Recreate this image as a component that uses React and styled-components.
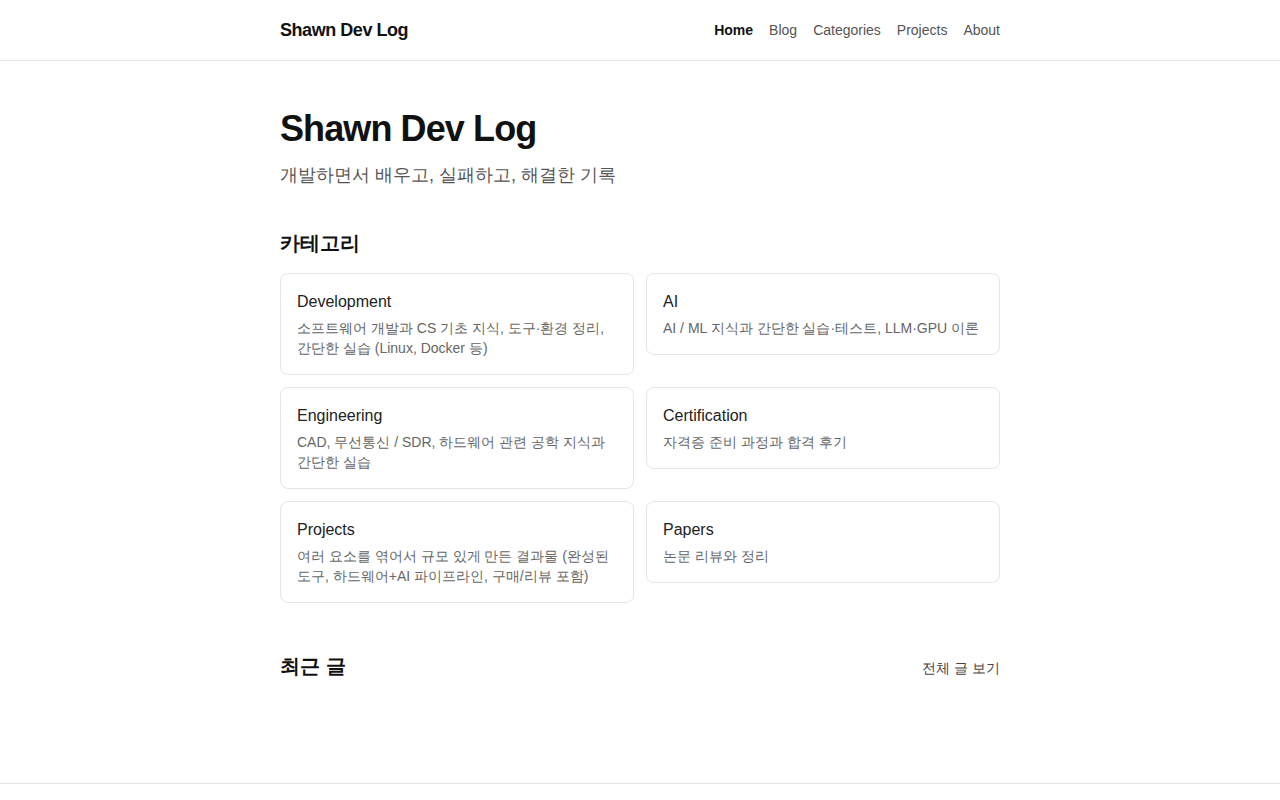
import React from "react";
import styled, { createGlobalStyle } from "styled-components";

const GlobalStyle = createGlobalStyle`
	* {
		box-sizing: border-box;
	}
	html, body {
		margin: 0;
		padding: 0;
		background: #ffffff;
	}
	body {
		font-family: "Liberation Sans", sans-serif;
		color: #111111;
		word-break: keep-all;
	}
	a {
		text-decoration: none;
		color: inherit;
	}
`;

const Shell = styled.div`
	min-height: 100vh;
	display: flex;
	flex-direction: column;
`;

const Header = styled.header`
	height: 61px;
	border-bottom: 1px solid #e5e5e5;
`;

const Inner = styled.div`
	width: 720px;
	margin: 0 auto;
`;

const HeaderRow = styled(Inner)`
	height: 60px;
	display: flex;
	align-items: center;
	justify-content: space-between;
`;

const Logo = styled.a`
	font-size: 18px;
	font-weight: 700;
	letter-spacing: -0.025em;
	color: #111111;
`;

const Nav = styled.nav`
	display: flex;
	gap: 16px;
`;

const NavLink = styled.a`
	font-size: 14px;
	font-weight: ${(p) => (p.$active ? 700 : 400)};
	color: ${(p) => (p.$active ? "#111111" : "#555555")};
`;

const Main = styled(Inner)`
	flex: 1;
	padding-top: 46px;
	padding-bottom: 89px;
`;

const Title = styled.h1`
	margin: 0;
	font-size: 36px;
	line-height: 1.2;
	font-weight: 700;
	letter-spacing: -0.025em;
	color: #111111;
`;

const Subtitle = styled.p`
	margin: 11px 0 0;
	font-size: 18px;
	line-height: 28px;
	color: #555555;
`;

const Section = styled.section`
	margin-top: ${(p) => p.$top || "40px"};
`;

const SectionHead = styled.div`
	display: flex;
	align-items: baseline;
	justify-content: space-between;
	margin-bottom: ${(p) => p.$gap || "14px"};
`;

const SectionTitle = styled.h2`
	margin: 0;
	font-size: 20px;
	line-height: 28px;
	font-weight: 700;
	color: #111111;
`;

const MoreLink = styled.a`
	font-size: 14px;
	color: #444444;
`;

const Grid = styled.div`
	display: grid;
	grid-template-columns: 1fr 1fr;
	gap: 12px;
	align-items: start;
`;

const Card = styled.a`
	display: block;
	border: 1px solid #e5e5e5;
	border-radius: 8px;
	padding: 16px;
	background: #ffffff;
`;

const CardTitle = styled.div`
	font-size: 16px;
	line-height: 24px;
	color: #222222;
`;

const CardDesc = styled.p`
	margin: 4px 0 0;
	font-size: 14px;
	line-height: 20px;
	color: #666666;
`;

const Footer = styled.footer`
	height: 17px;
	border-top: 1px solid #e5e5e5;
`;

const categories = [
	{ name: "Development", desc: "소프트웨어 개발과 CS 기초 지식, 도구·환경 정리, 간단한 실습 (Linux, Docker 등)" },
	{ name: "AI", desc: "AI / ML 지식과 간단한 실습·테스트, LLM·GPU 이론" },
	{ name: "Engineering", desc: "CAD, 무선통신 / SDR, 하드웨어 관련 공학 지식과 간단한 실습" },
	{ name: "Certification", desc: "자격증 준비 과정과 합격 후기" },
	{ name: "Projects", desc: "여러 요소를 엮어서 규모 있게 만든 결과물 (완성된 도구, 하드웨어+AI 파이프라인, 구매/리뷰 포함)" },
	{ name: "Papers", desc: "논문 리뷰와 정리" },
];

const navItems = ["Home", "Blog", "Categories", "Projects", "About"];

const App = () => {
	return (
		<Shell>
			<GlobalStyle />
			<Header>
				<HeaderRow>
					<Logo href="#">Shawn Dev Log</Logo>
					<Nav>
						{navItems.map((item) => (
							<NavLink key={item} href="#" $active={item === "Home"}>
								{item}
							</NavLink>
						))}
					</Nav>
				</HeaderRow>
			</Header>
			<Main>
				<Title>Shawn Dev Log</Title>
				<Subtitle>개발하면서 배우고, 실패하고, 해결한 기록</Subtitle>

				<Section $top="40px">
					<SectionHead $gap="16px">
						<SectionTitle>카테고리</SectionTitle>
					</SectionHead>
					<Grid>
						{categories.map((c) => (
							<Card key={c.name} href="#">
								<CardTitle>{c.name}</CardTitle>
								<CardDesc>{c.desc}</CardDesc>
							</Card>
						))}
					</Grid>
				</Section>

				<Section $top="49px">
					<SectionHead>
						<SectionTitle>최근 글</SectionTitle>
						<MoreLink href="#">전체 글 보기</MoreLink>
					</SectionHead>
				</Section>
			</Main>
			<Footer />
		</Shell>
	);
};

export default App;
